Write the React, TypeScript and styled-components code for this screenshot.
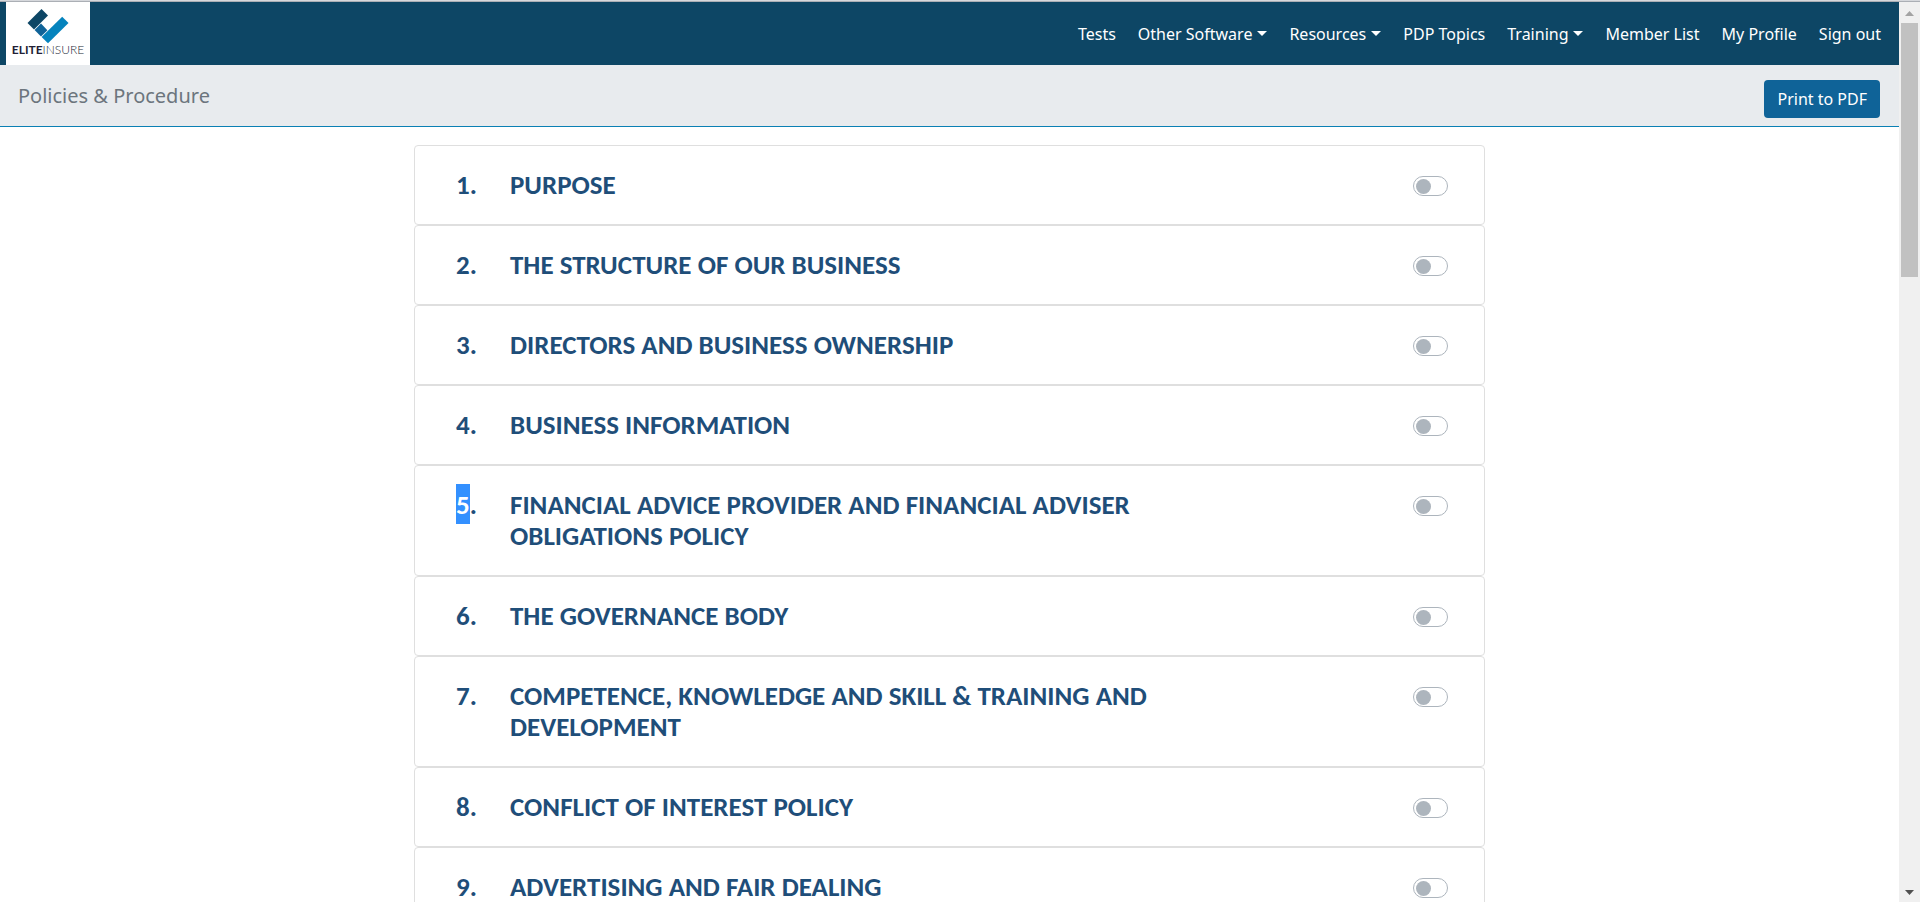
import React from "react";
import styled, { createGlobalStyle } from "styled-components";

const GlobalStyle = createGlobalStyle`
  * { box-sizing: border-box; }
  body {
    margin: 0;
    background: #fff;
    font-family: "Noto Sans", "Open Sans", sans-serif;
    font-size: 16px;
    line-height: 24px;
  }
`;

const Window = styled.div`
  display: grid;
  grid-template-columns: minmax(0, 1fr) 21px;
  height: 100vh;
  overflow: hidden;
  border-top: 1px solid #d6d8dc;
  box-shadow: inset 0 1px #abafb5;
  padding-top: 1px;
`;

const Page = styled.div`
  overflow-y: auto;
  scrollbar-width: none;
`;

const NavBar = styled.header`
  display: flex;
  align-items: center;
  justify-content: space-between;
  height: 63px;
  padding: 0 18px 0 6px;
  background: #0d4665;
`;

const Brand = styled.a`
  display: flex;
  flex-direction: column;
  align-items: center;
  width: 84px;
  height: 63px;
  padding-top: 6px;
  background: #fff;
  color: #221f35;
  text-decoration: none;
`;

const BrandName = styled.span`
  font-family: Lato, sans-serif;
  font-size: 12px;
  line-height: 12px;
  font-weight: 300;
  white-space: nowrap;

  b { font-weight: 700; }
`;

const NavLinks = styled.nav`
  display: flex;
  align-items: center;
  gap: 22px;
`;

const NavLink = styled.a`
  color: #fff;
  text-decoration: none;
  white-space: nowrap;
`;

const NavMenu = styled.button`
  display: flex;
  align-items: center;
  gap: 5px;
  padding: 0;
  border: 0;
  background: none;
  color: #fff;
  font: inherit;
  white-space: nowrap;

  &::after {
    content: "";
    border: 5px solid transparent;
    border-top-color: #fff;
    border-bottom: 0;
  }
`;

const TitleBar = styled.div`
  display: flex;
  align-items: flex-start;
  justify-content: space-between;
  height: 62px;
  padding: 15px 19px 0 18px;
  background: #e8ebee;
  border-bottom: 1px solid #0a80b4;
`;

const PageTitle = styled.h1`
  margin: 0;
  color: #6c757d;
  font-size: 20px;
  line-height: 32px;
  font-weight: 400;
`;

const PrintButton = styled.button`
  height: 38px;
  padding: 0 13px;
  border: 0;
  border-radius: 4px;
  background: #0f6398;
  color: #fff;
  font: inherit;
`;

const PolicyList = styled.main`
  max-width: 1071px;
  margin: 0 auto;
  padding: 18px 0;
`;

const PolicyCard = styled.section`
  display: grid;
  grid-template-columns: 54px minmax(0, 1fr) 35px;
  align-items: start;
  padding: 23px 36px 24px 41px;
  border: 1px solid #dfdfdf;
  border-radius: 4px;
  color: #1f4e79;
  font-family: Carlito, Calibri, "Open Sans", sans-serif;
  font-size: 27px;
  line-height: 31px;
  font-weight: 700;
`;

const PolicyNumber = styled.span`
  white-space: nowrap;
`;

const Highlight = styled.mark`
  padding: 4px 0 3px;
  background: #3390ff;
  color: #fff;
`;

const PolicyTitle = styled.label`
  justify-self: start;
  max-width: 700px;
`;

const Toggle = styled.input`
  appearance: none;
  display: flex;
  align-items: center;
  width: 35px;
  height: 20px;
  margin: 7px 0 0;
  padding: 0 2px;
  border: 1px solid #adb5bd;
  border-radius: 10px;
  background: #fff;

  &::before {
    content: "";
    width: 15px;
    height: 15px;
    border-radius: 50%;
    background: #adb5bd;
  }

  &:checked {
    justify-content: flex-end;
    background: #0f6398;
  }
`;

const ScrollRail = styled.div`
  display: flex;
  flex-direction: column;
  background: #f0f0f0;
`;

const ScrollArrow = styled.svg`
  flex: none;
  width: 21px;
  height: 21px;
`;

const ScrollThumb = styled.div`
  flex: 254 1 0;
  margin: 0 2px;
  background: #c1c1c1;
`;

const ScrollSpace = styled.div`
  flex: 604 1 0;
`;

const navItems = [
  { label: "Tests" },
  { label: "Other Software", menu: true },
  { label: "Resources", menu: true },
  { label: "PDP Topics" },
  { label: "Training", menu: true },
  { label: "Member List" },
  { label: "My Profile" },
  { label: "Sign out" },
];

const policies = [
  "PURPOSE",
  "THE STRUCTURE OF OUR BUSINESS",
  "DIRECTORS AND BUSINESS OWNERSHIP",
  "BUSINESS INFORMATION",
  "FINANCIAL ADVICE PROVIDER AND FINANCIAL ADVISER OBLIGATIONS POLICY",
  "THE GOVERNANCE BODY",
  "COMPETENCE, KNOWLEDGE AND SKILL & TRAINING AND DEVELOPMENT",
  "CONFLICT OF INTEREST POLICY",
  "ADVERTISING AND FAIR DEALING",
];

const selectedNumber = 5;

function BrandMark() {
  return (
    <svg width="42" height="36" viewBox="0 0 42 36" aria-hidden="true">
      <path d="M0.5 15 14.5 1 21 7.5 7 21.5z" fill="#0d4665" />
      <path d="M7.6 22.1 14 15.6 20.4 22.2 14 28.5z" fill="#0f6398" />
      <path d="M14.6 29.1 35.2 8.7 41.5 15 21 35.3z" fill="#0583bd" />
    </svg>
  );
}

export default function App() {
  return (
    <>
      <GlobalStyle />
      <Window>
        <Page>
          <NavBar>
            <Brand href="#home">
              <BrandMark />
              <BrandName><b>ELITE</b>INSURE</BrandName>
            </Brand>
            <NavLinks>
              {navItems.map(({ label, menu }) =>
                menu ? (
                  <NavMenu key={label} type="button" aria-haspopup="menu">{label}</NavMenu>
                ) : (
                  <NavLink key={label} href="#">{label}</NavLink>
                )
              )}
            </NavLinks>
          </NavBar>
          <TitleBar>
            <PageTitle>Policies &amp; Procedure</PageTitle>
            <PrintButton type="button">Print to PDF</PrintButton>
          </TitleBar>
          <PolicyList>
            {policies.map((title, index) => {
              const number = index + 1;
              const id = `policy-${number}`;
              return (
                <PolicyCard key={id}>
                  <PolicyNumber>
                    {number === selectedNumber ? <Highlight>{number}</Highlight> : number}.
                  </PolicyNumber>
                  <PolicyTitle htmlFor={id}>{title}</PolicyTitle>
                  <Toggle id={id} type="checkbox" role="switch" />
                </PolicyCard>
              );
            })}
          </PolicyList>
        </Page>
        <ScrollRail aria-hidden="true">
          <ScrollArrow viewBox="0 0 21 21"><path d="M6 14h9l-4.500-5z" fill="#a3a3a3" /></ScrollArrow>
          <ScrollThumb />
          <ScrollSpace />
          <ScrollArrow viewBox="0 0 21 21"><path d="M6 9h9l-4.500 5z" fill="#505050" /></ScrollArrow>
        </ScrollRail>
      </Window>
    </>
  );
}
